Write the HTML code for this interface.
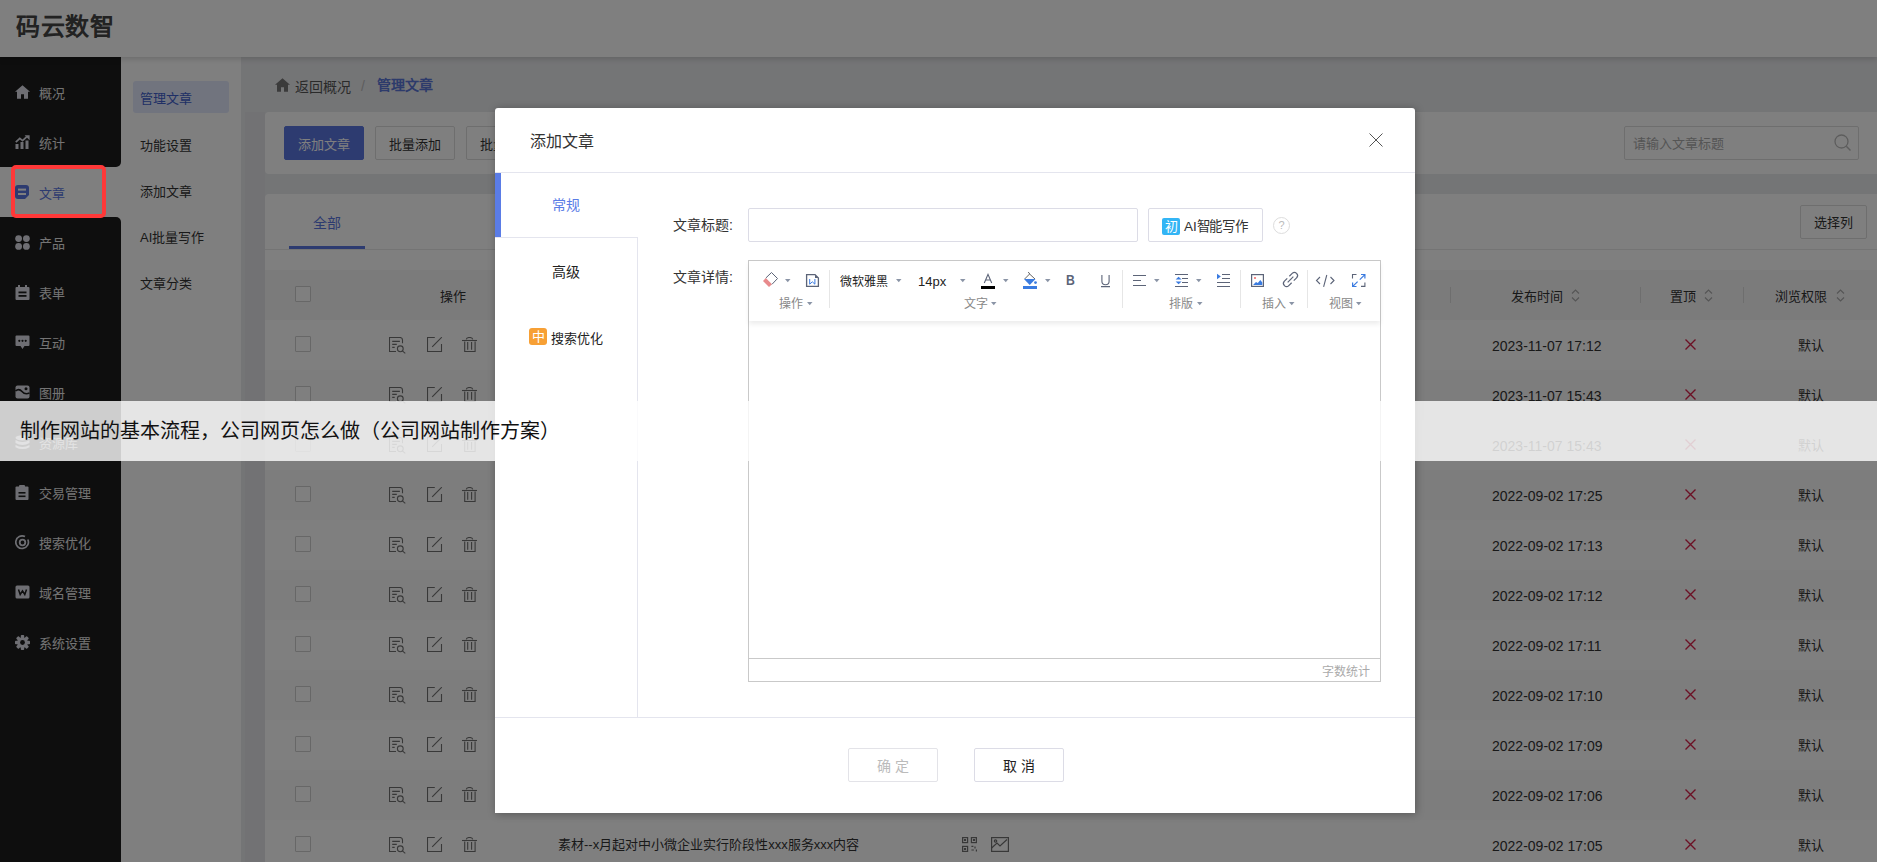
<!DOCTYPE html>
<html lang="zh-CN"><head><meta charset="utf-8"><style>
*{box-sizing:border-box;margin:0;padding:0}
html,body{width:1877px;height:862px;overflow:hidden;font-family:"Liberation Sans",sans-serif;background:#f0f1f5;color:#333}
.a{position:absolute}
.t{position:absolute;white-space:nowrap;line-height:20px}
.btn{position:absolute;height:34px;border:1px solid #dcdcdc;border-radius:2px;font-size:13px;line-height:35px;text-align:center;color:#333;background:#fff;white-space:nowrap}
.si{position:absolute;left:0;width:121px;height:50px}
.si span{position:absolute;left:39px;top:17px;line-height:20px;font-size:13px;color:#e8e8e8;white-space:nowrap}
.si svg{position:absolute;left:15px;top:18px}
</style></head><body>
<div class="a" style="left:241px;top:57px;width:1636px;height:805px;background:#e9eaed"></div>
<div class="a" style="left:245px;top:112px;width:20px;height:750px;background:#e4e5e8"></div>
<div class="a" style="left:121px;top:57px;width:120px;height:805px;background:#fff"></div>
<div class="a" style="left:133px;top:81px;width:96px;height:32px;background:#e2e8fd;border-radius:3px"></div>
<div class="t" style="left:140px;top:89px;font-size:13px;color:#3f5fcc">管理文章</div>
<div class="t" style="left:140px;top:136px;font-size:13px;color:#333">功能设置</div>
<div class="t" style="left:140px;top:182px;font-size:13px;color:#333">添加文章</div>
<div class="t" style="left:140px;top:228px;font-size:13px;color:#333">AI批量写作</div>
<div class="t" style="left:140px;top:274px;font-size:13px;color:#333">文章分类</div>
<div class="a" style="left:0;top:57px;width:121px;height:805px;background:#fff"></div>
<div class="a" style="left:0;top:57px;width:121px;height:110px;background:#1c1c1c;border-bottom-right-radius:5px"></div>
<div class="a" style="left:0;top:217px;width:121px;height:645px;background:#1c1c1c;border-top-right-radius:5px"></div>
<div class="si" style="top:67px"><svg width="15" height="14" viewBox="0 0 15 14"><path d="M7.5 0.3 L0 6.8 H2 V13.7 H6 V9.3 H9 V13.7 H13 V6.8 H15 Z" fill="#dcdde6"/></svg><span style="color:#e8e8e8">概况</span></div>
<div class="si" style="top:117px"><svg width="15" height="14" viewBox="0 0 15 14" fill="#dcdde6"><rect x="0.5" y="9" width="3" height="5"/><rect x="5.5" y="7" width="3" height="7"/><rect x="10.5" y="5.5" width="3" height="8.5"/><path d="M0.8 7.2 L4.8 3.4 L7.6 5.6 L11.6 1.8" stroke="#dcdde6" stroke-width="1.8" fill="none"/><path d="M9.6 0.2 H14.6 V5.2 z"/></svg><span style="color:#e8e8e8">统计</span></div>
<div class="si" style="top:167px"><svg width="14" height="14" viewBox="0 0 14 14"><path d="M3 0 H11 Q14 0 14 3 V10 L10 14 H3 Q0 14 0 11 V3 Q0 0 3 0Z" fill="#5a76e0"/><rect x="3" y="3.6" width="8" height="2" fill="#fff"/><rect x="3" y="8" width="8" height="2" fill="#fff"/></svg><span style="color:#5a76e0">文章</span></div>
<div class="si" style="top:217px"><svg width="15" height="15" viewBox="0 0 15 15" fill="#dcdde6"><circle cx="3.6" cy="3.6" r="3.4"/><circle cx="11.4" cy="3.6" r="3.4"/><circle cx="3.6" cy="11.4" r="3.4"/><circle cx="11.4" cy="11.4" r="3.4"/></svg><span style="color:#e8e8e8">产品</span></div>
<div class="si" style="top:267px"><svg width="15" height="15" viewBox="0 0 15 15"><path d="M1.5 2 H13.5 Q14.5 2 14.5 3 V14 Q14.5 15 13.5 15 H1.5 Q0.5 15 0.5 14 V3 Q0.5 2 1.5 2Z" fill="#dcdde6"/><rect x="3" y="0" width="2" height="4" fill="#dcdde6"/><rect x="10" y="0" width="2" height="4" fill="#dcdde6"/><rect x="3.5" y="6.5" width="8" height="1.8" fill="#1c1c1c"/><rect x="3.5" y="10" width="8" height="1.8" fill="#1c1c1c"/></svg><span style="color:#e8e8e8">表单</span></div>
<div class="si" style="top:317px"><svg width="15" height="15" viewBox="0 0 15 15"><path d="M1.5 0.5 H13.5 Q14.5 0.5 14.5 1.5 V10 Q14.5 11 13.5 11 H9.5 L7.5 14 L5.5 11 H1.5 Q0.5 11 0.5 10 V1.5 Q0.5 0.5 1.5 0.5Z" fill="#dcdde6"/><circle cx="4.3" cy="5.8" r="1.1" fill="#1c1c1c"/><circle cx="7.5" cy="5.8" r="1.1" fill="#1c1c1c"/><circle cx="10.7" cy="5.8" r="1.1" fill="#1c1c1c"/></svg><span style="color:#e8e8e8">互动</span></div>
<div class="si" style="top:367px"><svg width="15" height="14" viewBox="0 0 15 14"><rect x="0.5" y="0.5" width="14" height="13" rx="2" fill="#dcdde6"/><path d="M0.5 6 Q4 3 7 6.5 Q10 10 14.5 8" stroke="#1c1c1c" stroke-width="1.6" fill="none"/><circle cx="11" cy="3.8" r="1.5" fill="#1c1c1c"/></svg><span style="color:#e8e8e8">图册</span></div>
<div class="si" style="top:417px"><svg width="15" height="15" viewBox="0 0 15 15" fill="#dcdde6"><ellipse cx="7.5" cy="2.8" rx="7" ry="2.6"/><path d="M0.5 5 Q7.5 9 14.5 5 V8 Q7.5 12 0.5 8z"/><path d="M0.5 10 Q7.5 14 14.5 10 V12.2 Q7.5 16 0.5 12.2z"/></svg><span style="color:#e8e8e8">资源库</span></div>
<div class="si" style="top:467px"><svg width="14" height="15" viewBox="0 0 14 15"><path d="M1.5 1.5 H12.5 Q13.5 1.5 13.5 2.5 V14 Q13.5 15 12.5 15 H1.5 Q0.5 15 0.5 14 V2.5 Q0.5 1.5 1.5 1.5Z" fill="#dcdde6"/><rect x="4" y="0" width="6" height="3" rx="1" fill="#dcdde6"/><rect x="3.5" y="7" width="7" height="1.6" fill="#1c1c1c"/><rect x="3.5" y="10.5" width="7" height="1.6" fill="#1c1c1c"/></svg><span style="color:#e8e8e8">交易管理</span></div>
<div class="si" style="top:517px"><svg width="15" height="15" viewBox="0 0 15 15" fill="none" stroke="#dcdde6"><path d="M12.8 4.5 A6.3 6.3 0 1 1 10 1.6" stroke-width="1.7"/><circle cx="7.5" cy="7.5" r="2.8" stroke-width="1.8"/></svg><span style="color:#e8e8e8">搜索优化</span></div>
<div class="si" style="top:567px"><svg width="15" height="14" viewBox="0 0 15 14"><rect x="0.5" y="0.5" width="14" height="13" rx="1.5" fill="#dcdde6"/><path d="M3.5 4.5 L5.2 9.5 L7.5 5.8 L9.8 9.5 L11.5 4.5" stroke="#1c1c1c" stroke-width="1.5" fill="none"/></svg><span style="color:#e8e8e8">域名管理</span></div>
<div class="si" style="top:617px"><svg width="15" height="15" viewBox="0 0 15 15"><g fill="#dcdde6"><circle cx="7.5" cy="7.5" r="5.3"/><rect x="5.8" y="0" width="3.4" height="15" rx="0.8"/><rect x="0" y="5.8" width="15" height="3.4" rx="0.8"/><rect x="5.8" y="0" width="3.4" height="15" rx="0.8" transform="rotate(45 7.5 7.5)"/><rect x="5.8" y="0" width="3.4" height="15" rx="0.8" transform="rotate(-45 7.5 7.5)"/></g><circle cx="7.5" cy="7.5" r="2.4" fill="#1c1c1c"/></svg><span style="color:#e8e8e8">系统设置</span></div>
<div class="a" style="left:0;top:0;width:1877px;height:57px;background:#fff;box-shadow:0 2px 6px rgba(0,0,0,.16)"></div>
<div class="t" style="left:16px;top:12px;font-size:24px;line-height:30px;font-weight:bold;color:#444;letter-spacing:0.5px">码云数智</div>
<svg class="a" style="left:275px;top:78px" width="15" height="14" viewBox="0 0 15 14"><path d="M7.5 0.3 L0 6.8 H2 V13.7 H6 V9.3 H9 V13.7 H13 V6.8 H15 Z" fill="#777"/></svg>
<div class="t" style="left:295px;top:77px;font-size:14px;color:#555">返回概况</div>
<div class="t" style="left:361px;top:76px;font-size:14px;color:#bbb">/</div>
<div class="t" style="left:377px;top:75px;font-size:14px;color:#5a76d6;font-weight:bold">管理文章</div>
<div class="a" style="left:265px;top:112px;width:1630px;height:62px;background:#fff;border-radius:4px"></div>
<div class="btn" style="left:284px;top:126px;width:80px;background:#5a76e0;border-color:#5a76e0;color:#fff">添加文章</div>
<div class="btn" style="left:375px;top:126px;width:80px">批量添加</div>
<div class="btn" style="left:466px;top:126px;width:80px">批量删除</div>
<div class="a" style="left:1624px;top:126px;width:235px;height:34px;border:1px solid #dcdcdc;border-radius:2px;background:#fff"></div>
<div class="t" style="left:1633px;top:134px;font-size:13px;color:#aaa">请输入文章标题</div>
<svg class="a" style="left:1834px;top:134px" width="18" height="18" viewBox="0 0 18 18"><circle cx="7.5" cy="7.5" r="6.5" fill="none" stroke="#bbb" stroke-width="1.3"/><path d="M12.3 12.3 L16.5 16.5" stroke="#bbb" stroke-width="1.5"/></svg>
<div class="a" style="left:265px;top:194px;width:1630px;height:700px;background:#fff;border-radius:4px"></div>
<div class="t" style="left:313px;top:213px;font-size:14px;color:#5a76e0">全部</div>
<div class="a" style="left:289px;top:246px;width:76px;height:3px;background:#5a76e0"></div>
<div class="a" style="left:265px;top:249px;width:1612px;height:1px;background:#e8e8e8"></div>
<div class="btn" style="left:1800px;top:205px;width:67px;height:34px;line-height:33px">选择列</div>
<div class="a" style="left:265px;top:270px;width:1612px;height:50px;background:#f6f6f7"></div>
<div class="a" style="left:295px;top:286px;width:16px;height:16px;border:1px solid #cfcfcf;background:#fff;border-radius:1px"></div>
<div class="t" style="left:440px;top:287px;font-size:13px;color:#333">操作</div>
<div class="a" style="left:1450px;top:287px;width:1px;height:16px;background:#ddd"></div>
<div class="a" style="left:1640px;top:287px;width:1px;height:16px;background:#ddd"></div>
<div class="a" style="left:1743px;top:287px;width:1px;height:16px;background:#ddd"></div>
<div class="t" style="left:1511px;top:287px;font-size:13px;color:#333">发布时间</div>
<div class="a" style="left:1571px;top:288px"><svg width="9" height="15" viewBox="0 0 9 15" fill="none" stroke="#aaa" stroke-width="1.1"><path d="M1 5.5 L4.5 2 L8 5.5M1 9.5 L4.5 13 L8 9.5"/></svg></div>
<div class="t" style="left:1670px;top:287px;font-size:13px;color:#333">置顶</div>
<div class="a" style="left:1704px;top:288px"><svg width="9" height="15" viewBox="0 0 9 15" fill="none" stroke="#aaa" stroke-width="1.1"><path d="M1 5.5 L4.5 2 L8 5.5M1 9.5 L4.5 13 L8 9.5"/></svg></div>
<div class="t" style="left:1775px;top:287px;font-size:13px;color:#333">浏览权限</div>
<div class="a" style="left:1836px;top:288px"><svg width="9" height="15" viewBox="0 0 9 15" fill="none" stroke="#aaa" stroke-width="1.1"><path d="M1 5.5 L4.5 2 L8 5.5M1 9.5 L4.5 13 L8 9.5"/></svg></div>
<div class="a" style="left:265px;top:320px;width:1612px;height:50px;background:#fff"></div>
<div class="a" style="left:295px;top:336px;width:16px;height:16px;border:1px solid #cfcfcf;background:#fff;border-radius:1px"></div>
<div class="a" style="left:389px;top:337px"><svg width="18" height="17" viewBox="0 0 18 17" fill="none" stroke="#707070" stroke-width="1.1"><path d="M7 14.5 H0.5 V0.5 H11 Q13.5 0.5 13.5 3 V6.3"/><path d="M3.2 4.4 H10.9 M3.2 7.4 H7.8 M3.2 10.4 H5.7"/><circle cx="11.3" cy="11.8" r="2.9"/><path d="M13.35 13.85 L16.3 16.3"/></svg></div>
<div class="a" style="left:427px;top:337px"><svg width="16" height="16" viewBox="0 0 16 16" fill="none" stroke="#707070" stroke-width="1.1"><path d="M7.8 0.5 H0.5 V14.5 H14.5 V7"/><path d="M5.2 9.8 L14.8 0.2"/></svg></div>
<div class="a" style="left:462px;top:337px"><svg width="16" height="16" viewBox="0 0 16 16" fill="none" stroke="#707070" stroke-width="1.1"><path d="M0 3.5 H15"/><path d="M4.3 2.3 Q4.6 0.5 7.5 0.5 Q10.4 0.5 10.7 2.3"/><path d="M2.7 4.6 V14.5 H13.1 V4.6"/><path d="M5.7 5 V12.7 M9.6 5 V12.7"/></svg></div>
<div class="t" style="left:1492px;top:336px;font-size:14px;color:#333">2023-11-07 17:12</div>
<svg class="a" style="left:1685px;top:339px" width="11" height="11" viewBox="0 0 11 11" stroke="#d9224a" stroke-width="1.4"><path d="M0.5 0.5 L10.5 10.5M10.5 0.5 L0.5 10.5"/></svg>
<div class="t" style="left:1798px;top:336px;font-size:13px;color:#333">默认</div>
<div class="a" style="left:265px;top:370px;width:1612px;height:50px;background:#fafafa"></div>
<div class="a" style="left:295px;top:386px;width:16px;height:16px;border:1px solid #cfcfcf;background:#fff;border-radius:1px"></div>
<div class="a" style="left:389px;top:387px"><svg width="18" height="17" viewBox="0 0 18 17" fill="none" stroke="#707070" stroke-width="1.1"><path d="M7 14.5 H0.5 V0.5 H11 Q13.5 0.5 13.5 3 V6.3"/><path d="M3.2 4.4 H10.9 M3.2 7.4 H7.8 M3.2 10.4 H5.7"/><circle cx="11.3" cy="11.8" r="2.9"/><path d="M13.35 13.85 L16.3 16.3"/></svg></div>
<div class="a" style="left:427px;top:387px"><svg width="16" height="16" viewBox="0 0 16 16" fill="none" stroke="#707070" stroke-width="1.1"><path d="M7.8 0.5 H0.5 V14.5 H14.5 V7"/><path d="M5.2 9.8 L14.8 0.2"/></svg></div>
<div class="a" style="left:462px;top:387px"><svg width="16" height="16" viewBox="0 0 16 16" fill="none" stroke="#707070" stroke-width="1.1"><path d="M0 3.5 H15"/><path d="M4.3 2.3 Q4.6 0.5 7.5 0.5 Q10.4 0.5 10.7 2.3"/><path d="M2.7 4.6 V14.5 H13.1 V4.6"/><path d="M5.7 5 V12.7 M9.6 5 V12.7"/></svg></div>
<div class="t" style="left:1492px;top:386px;font-size:14px;color:#333">2023-11-07 15:43</div>
<svg class="a" style="left:1685px;top:389px" width="11" height="11" viewBox="0 0 11 11" stroke="#d9224a" stroke-width="1.4"><path d="M0.5 0.5 L10.5 10.5M10.5 0.5 L0.5 10.5"/></svg>
<div class="t" style="left:1798px;top:386px;font-size:13px;color:#333">默认</div>
<div class="a" style="left:265px;top:420px;width:1612px;height:50px;background:#fff"></div>
<div class="a" style="left:295px;top:436px;width:16px;height:16px;border:1px solid #cfcfcf;background:#fff;border-radius:1px"></div>
<div class="a" style="left:389px;top:437px"><svg width="18" height="17" viewBox="0 0 18 17" fill="none" stroke="#707070" stroke-width="1.1"><path d="M7 14.5 H0.5 V0.5 H11 Q13.5 0.5 13.5 3 V6.3"/><path d="M3.2 4.4 H10.9 M3.2 7.4 H7.8 M3.2 10.4 H5.7"/><circle cx="11.3" cy="11.8" r="2.9"/><path d="M13.35 13.85 L16.3 16.3"/></svg></div>
<div class="a" style="left:427px;top:437px"><svg width="16" height="16" viewBox="0 0 16 16" fill="none" stroke="#707070" stroke-width="1.1"><path d="M7.8 0.5 H0.5 V14.5 H14.5 V7"/><path d="M5.2 9.8 L14.8 0.2"/></svg></div>
<div class="a" style="left:462px;top:437px"><svg width="16" height="16" viewBox="0 0 16 16" fill="none" stroke="#707070" stroke-width="1.1"><path d="M0 3.5 H15"/><path d="M4.3 2.3 Q4.6 0.5 7.5 0.5 Q10.4 0.5 10.7 2.3"/><path d="M2.7 4.6 V14.5 H13.1 V4.6"/><path d="M5.7 5 V12.7 M9.6 5 V12.7"/></svg></div>
<div class="t" style="left:1492px;top:436px;font-size:14px;color:#333">2023-11-07 15:43</div>
<svg class="a" style="left:1685px;top:439px" width="11" height="11" viewBox="0 0 11 11" stroke="#d9224a" stroke-width="1.4"><path d="M0.5 0.5 L10.5 10.5M10.5 0.5 L0.5 10.5"/></svg>
<div class="t" style="left:1798px;top:436px;font-size:13px;color:#333">默认</div>
<div class="a" style="left:265px;top:470px;width:1612px;height:50px;background:#fafafa"></div>
<div class="a" style="left:295px;top:486px;width:16px;height:16px;border:1px solid #cfcfcf;background:#fff;border-radius:1px"></div>
<div class="a" style="left:389px;top:487px"><svg width="18" height="17" viewBox="0 0 18 17" fill="none" stroke="#707070" stroke-width="1.1"><path d="M7 14.5 H0.5 V0.5 H11 Q13.5 0.5 13.5 3 V6.3"/><path d="M3.2 4.4 H10.9 M3.2 7.4 H7.8 M3.2 10.4 H5.7"/><circle cx="11.3" cy="11.8" r="2.9"/><path d="M13.35 13.85 L16.3 16.3"/></svg></div>
<div class="a" style="left:427px;top:487px"><svg width="16" height="16" viewBox="0 0 16 16" fill="none" stroke="#707070" stroke-width="1.1"><path d="M7.8 0.5 H0.5 V14.5 H14.5 V7"/><path d="M5.2 9.8 L14.8 0.2"/></svg></div>
<div class="a" style="left:462px;top:487px"><svg width="16" height="16" viewBox="0 0 16 16" fill="none" stroke="#707070" stroke-width="1.1"><path d="M0 3.5 H15"/><path d="M4.3 2.3 Q4.6 0.5 7.5 0.5 Q10.4 0.5 10.7 2.3"/><path d="M2.7 4.6 V14.5 H13.1 V4.6"/><path d="M5.7 5 V12.7 M9.6 5 V12.7"/></svg></div>
<div class="t" style="left:1492px;top:486px;font-size:14px;color:#333">2022-09-02 17:25</div>
<svg class="a" style="left:1685px;top:489px" width="11" height="11" viewBox="0 0 11 11" stroke="#d9224a" stroke-width="1.4"><path d="M0.5 0.5 L10.5 10.5M10.5 0.5 L0.5 10.5"/></svg>
<div class="t" style="left:1798px;top:486px;font-size:13px;color:#333">默认</div>
<div class="a" style="left:265px;top:520px;width:1612px;height:50px;background:#fff"></div>
<div class="a" style="left:295px;top:536px;width:16px;height:16px;border:1px solid #cfcfcf;background:#fff;border-radius:1px"></div>
<div class="a" style="left:389px;top:537px"><svg width="18" height="17" viewBox="0 0 18 17" fill="none" stroke="#707070" stroke-width="1.1"><path d="M7 14.5 H0.5 V0.5 H11 Q13.5 0.5 13.5 3 V6.3"/><path d="M3.2 4.4 H10.9 M3.2 7.4 H7.8 M3.2 10.4 H5.7"/><circle cx="11.3" cy="11.8" r="2.9"/><path d="M13.35 13.85 L16.3 16.3"/></svg></div>
<div class="a" style="left:427px;top:537px"><svg width="16" height="16" viewBox="0 0 16 16" fill="none" stroke="#707070" stroke-width="1.1"><path d="M7.8 0.5 H0.5 V14.5 H14.5 V7"/><path d="M5.2 9.8 L14.8 0.2"/></svg></div>
<div class="a" style="left:462px;top:537px"><svg width="16" height="16" viewBox="0 0 16 16" fill="none" stroke="#707070" stroke-width="1.1"><path d="M0 3.5 H15"/><path d="M4.3 2.3 Q4.6 0.5 7.5 0.5 Q10.4 0.5 10.7 2.3"/><path d="M2.7 4.6 V14.5 H13.1 V4.6"/><path d="M5.7 5 V12.7 M9.6 5 V12.7"/></svg></div>
<div class="t" style="left:1492px;top:536px;font-size:14px;color:#333">2022-09-02 17:13</div>
<svg class="a" style="left:1685px;top:539px" width="11" height="11" viewBox="0 0 11 11" stroke="#d9224a" stroke-width="1.4"><path d="M0.5 0.5 L10.5 10.5M10.5 0.5 L0.5 10.5"/></svg>
<div class="t" style="left:1798px;top:536px;font-size:13px;color:#333">默认</div>
<div class="a" style="left:265px;top:570px;width:1612px;height:50px;background:#fafafa"></div>
<div class="a" style="left:295px;top:586px;width:16px;height:16px;border:1px solid #cfcfcf;background:#fff;border-radius:1px"></div>
<div class="a" style="left:389px;top:587px"><svg width="18" height="17" viewBox="0 0 18 17" fill="none" stroke="#707070" stroke-width="1.1"><path d="M7 14.5 H0.5 V0.5 H11 Q13.5 0.5 13.5 3 V6.3"/><path d="M3.2 4.4 H10.9 M3.2 7.4 H7.8 M3.2 10.4 H5.7"/><circle cx="11.3" cy="11.8" r="2.9"/><path d="M13.35 13.85 L16.3 16.3"/></svg></div>
<div class="a" style="left:427px;top:587px"><svg width="16" height="16" viewBox="0 0 16 16" fill="none" stroke="#707070" stroke-width="1.1"><path d="M7.8 0.5 H0.5 V14.5 H14.5 V7"/><path d="M5.2 9.8 L14.8 0.2"/></svg></div>
<div class="a" style="left:462px;top:587px"><svg width="16" height="16" viewBox="0 0 16 16" fill="none" stroke="#707070" stroke-width="1.1"><path d="M0 3.5 H15"/><path d="M4.3 2.3 Q4.6 0.5 7.5 0.5 Q10.4 0.5 10.7 2.3"/><path d="M2.7 4.6 V14.5 H13.1 V4.6"/><path d="M5.7 5 V12.7 M9.6 5 V12.7"/></svg></div>
<div class="t" style="left:1492px;top:586px;font-size:14px;color:#333">2022-09-02 17:12</div>
<svg class="a" style="left:1685px;top:589px" width="11" height="11" viewBox="0 0 11 11" stroke="#d9224a" stroke-width="1.4"><path d="M0.5 0.5 L10.5 10.5M10.5 0.5 L0.5 10.5"/></svg>
<div class="t" style="left:1798px;top:586px;font-size:13px;color:#333">默认</div>
<div class="a" style="left:265px;top:620px;width:1612px;height:50px;background:#fff"></div>
<div class="a" style="left:295px;top:636px;width:16px;height:16px;border:1px solid #cfcfcf;background:#fff;border-radius:1px"></div>
<div class="a" style="left:389px;top:637px"><svg width="18" height="17" viewBox="0 0 18 17" fill="none" stroke="#707070" stroke-width="1.1"><path d="M7 14.5 H0.5 V0.5 H11 Q13.5 0.5 13.5 3 V6.3"/><path d="M3.2 4.4 H10.9 M3.2 7.4 H7.8 M3.2 10.4 H5.7"/><circle cx="11.3" cy="11.8" r="2.9"/><path d="M13.35 13.85 L16.3 16.3"/></svg></div>
<div class="a" style="left:427px;top:637px"><svg width="16" height="16" viewBox="0 0 16 16" fill="none" stroke="#707070" stroke-width="1.1"><path d="M7.8 0.5 H0.5 V14.5 H14.5 V7"/><path d="M5.2 9.8 L14.8 0.2"/></svg></div>
<div class="a" style="left:462px;top:637px"><svg width="16" height="16" viewBox="0 0 16 16" fill="none" stroke="#707070" stroke-width="1.1"><path d="M0 3.5 H15"/><path d="M4.3 2.3 Q4.6 0.5 7.5 0.5 Q10.4 0.5 10.7 2.3"/><path d="M2.7 4.6 V14.5 H13.1 V4.6"/><path d="M5.7 5 V12.7 M9.6 5 V12.7"/></svg></div>
<div class="t" style="left:1492px;top:636px;font-size:14px;color:#333">2022-09-02 17:11</div>
<svg class="a" style="left:1685px;top:639px" width="11" height="11" viewBox="0 0 11 11" stroke="#d9224a" stroke-width="1.4"><path d="M0.5 0.5 L10.5 10.5M10.5 0.5 L0.5 10.5"/></svg>
<div class="t" style="left:1798px;top:636px;font-size:13px;color:#333">默认</div>
<div class="a" style="left:265px;top:670px;width:1612px;height:50px;background:#fafafa"></div>
<div class="a" style="left:295px;top:686px;width:16px;height:16px;border:1px solid #cfcfcf;background:#fff;border-radius:1px"></div>
<div class="a" style="left:389px;top:687px"><svg width="18" height="17" viewBox="0 0 18 17" fill="none" stroke="#707070" stroke-width="1.1"><path d="M7 14.5 H0.5 V0.5 H11 Q13.5 0.5 13.5 3 V6.3"/><path d="M3.2 4.4 H10.9 M3.2 7.4 H7.8 M3.2 10.4 H5.7"/><circle cx="11.3" cy="11.8" r="2.9"/><path d="M13.35 13.85 L16.3 16.3"/></svg></div>
<div class="a" style="left:427px;top:687px"><svg width="16" height="16" viewBox="0 0 16 16" fill="none" stroke="#707070" stroke-width="1.1"><path d="M7.8 0.5 H0.5 V14.5 H14.5 V7"/><path d="M5.2 9.8 L14.8 0.2"/></svg></div>
<div class="a" style="left:462px;top:687px"><svg width="16" height="16" viewBox="0 0 16 16" fill="none" stroke="#707070" stroke-width="1.1"><path d="M0 3.5 H15"/><path d="M4.3 2.3 Q4.6 0.5 7.5 0.5 Q10.4 0.5 10.7 2.3"/><path d="M2.7 4.6 V14.5 H13.1 V4.6"/><path d="M5.7 5 V12.7 M9.6 5 V12.7"/></svg></div>
<div class="t" style="left:1492px;top:686px;font-size:14px;color:#333">2022-09-02 17:10</div>
<svg class="a" style="left:1685px;top:689px" width="11" height="11" viewBox="0 0 11 11" stroke="#d9224a" stroke-width="1.4"><path d="M0.5 0.5 L10.5 10.5M10.5 0.5 L0.5 10.5"/></svg>
<div class="t" style="left:1798px;top:686px;font-size:13px;color:#333">默认</div>
<div class="a" style="left:265px;top:720px;width:1612px;height:50px;background:#fff"></div>
<div class="a" style="left:295px;top:736px;width:16px;height:16px;border:1px solid #cfcfcf;background:#fff;border-radius:1px"></div>
<div class="a" style="left:389px;top:737px"><svg width="18" height="17" viewBox="0 0 18 17" fill="none" stroke="#707070" stroke-width="1.1"><path d="M7 14.5 H0.5 V0.5 H11 Q13.5 0.5 13.5 3 V6.3"/><path d="M3.2 4.4 H10.9 M3.2 7.4 H7.8 M3.2 10.4 H5.7"/><circle cx="11.3" cy="11.8" r="2.9"/><path d="M13.35 13.85 L16.3 16.3"/></svg></div>
<div class="a" style="left:427px;top:737px"><svg width="16" height="16" viewBox="0 0 16 16" fill="none" stroke="#707070" stroke-width="1.1"><path d="M7.8 0.5 H0.5 V14.5 H14.5 V7"/><path d="M5.2 9.8 L14.8 0.2"/></svg></div>
<div class="a" style="left:462px;top:737px"><svg width="16" height="16" viewBox="0 0 16 16" fill="none" stroke="#707070" stroke-width="1.1"><path d="M0 3.5 H15"/><path d="M4.3 2.3 Q4.6 0.5 7.5 0.5 Q10.4 0.5 10.7 2.3"/><path d="M2.7 4.6 V14.5 H13.1 V4.6"/><path d="M5.7 5 V12.7 M9.6 5 V12.7"/></svg></div>
<div class="t" style="left:1492px;top:736px;font-size:14px;color:#333">2022-09-02 17:09</div>
<svg class="a" style="left:1685px;top:739px" width="11" height="11" viewBox="0 0 11 11" stroke="#d9224a" stroke-width="1.4"><path d="M0.5 0.5 L10.5 10.5M10.5 0.5 L0.5 10.5"/></svg>
<div class="t" style="left:1798px;top:736px;font-size:13px;color:#333">默认</div>
<div class="a" style="left:265px;top:770px;width:1612px;height:50px;background:#fafafa"></div>
<div class="a" style="left:295px;top:786px;width:16px;height:16px;border:1px solid #cfcfcf;background:#fff;border-radius:1px"></div>
<div class="a" style="left:389px;top:787px"><svg width="18" height="17" viewBox="0 0 18 17" fill="none" stroke="#707070" stroke-width="1.1"><path d="M7 14.5 H0.5 V0.5 H11 Q13.5 0.5 13.5 3 V6.3"/><path d="M3.2 4.4 H10.9 M3.2 7.4 H7.8 M3.2 10.4 H5.7"/><circle cx="11.3" cy="11.8" r="2.9"/><path d="M13.35 13.85 L16.3 16.3"/></svg></div>
<div class="a" style="left:427px;top:787px"><svg width="16" height="16" viewBox="0 0 16 16" fill="none" stroke="#707070" stroke-width="1.1"><path d="M7.8 0.5 H0.5 V14.5 H14.5 V7"/><path d="M5.2 9.8 L14.8 0.2"/></svg></div>
<div class="a" style="left:462px;top:787px"><svg width="16" height="16" viewBox="0 0 16 16" fill="none" stroke="#707070" stroke-width="1.1"><path d="M0 3.5 H15"/><path d="M4.3 2.3 Q4.6 0.5 7.5 0.5 Q10.4 0.5 10.7 2.3"/><path d="M2.7 4.6 V14.5 H13.1 V4.6"/><path d="M5.7 5 V12.7 M9.6 5 V12.7"/></svg></div>
<div class="t" style="left:1492px;top:786px;font-size:14px;color:#333">2022-09-02 17:06</div>
<svg class="a" style="left:1685px;top:789px" width="11" height="11" viewBox="0 0 11 11" stroke="#d9224a" stroke-width="1.4"><path d="M0.5 0.5 L10.5 10.5M10.5 0.5 L0.5 10.5"/></svg>
<div class="t" style="left:1798px;top:786px;font-size:13px;color:#333">默认</div>
<div class="a" style="left:265px;top:820px;width:1612px;height:50px;background:#fff"></div>
<div class="a" style="left:295px;top:836px;width:16px;height:16px;border:1px solid #cfcfcf;background:#fff;border-radius:1px"></div>
<div class="a" style="left:389px;top:837px"><svg width="18" height="17" viewBox="0 0 18 17" fill="none" stroke="#707070" stroke-width="1.1"><path d="M7 14.5 H0.5 V0.5 H11 Q13.5 0.5 13.5 3 V6.3"/><path d="M3.2 4.4 H10.9 M3.2 7.4 H7.8 M3.2 10.4 H5.7"/><circle cx="11.3" cy="11.8" r="2.9"/><path d="M13.35 13.85 L16.3 16.3"/></svg></div>
<div class="a" style="left:427px;top:837px"><svg width="16" height="16" viewBox="0 0 16 16" fill="none" stroke="#707070" stroke-width="1.1"><path d="M7.8 0.5 H0.5 V14.5 H14.5 V7"/><path d="M5.2 9.8 L14.8 0.2"/></svg></div>
<div class="a" style="left:462px;top:837px"><svg width="16" height="16" viewBox="0 0 16 16" fill="none" stroke="#707070" stroke-width="1.1"><path d="M0 3.5 H15"/><path d="M4.3 2.3 Q4.6 0.5 7.5 0.5 Q10.4 0.5 10.7 2.3"/><path d="M2.7 4.6 V14.5 H13.1 V4.6"/><path d="M5.7 5 V12.7 M9.6 5 V12.7"/></svg></div>
<div class="t" style="left:1492px;top:836px;font-size:14px;color:#333">2022-09-02 17:05</div>
<svg class="a" style="left:1685px;top:839px" width="11" height="11" viewBox="0 0 11 11" stroke="#d9224a" stroke-width="1.4"><path d="M0.5 0.5 L10.5 10.5M10.5 0.5 L0.5 10.5"/></svg>
<div class="t" style="left:1798px;top:836px;font-size:13px;color:#333">默认</div>
<div class="t" style="left:558px;top:835px;font-size:13px;color:#333">素材--x月起对中小微企业实行阶段性xxx服务xxx内容</div>
<svg class="a" style="left:962px;top:837px" width="15" height="15" viewBox="0 0 15 15" fill="none" stroke="#707070" stroke-width="1.2"><rect x="0.6" y="0.6" width="5" height="5"/><rect x="9.4" y="0.6" width="5" height="5"/><rect x="0.6" y="9.4" width="5" height="5"/><path d="M2.5 2.5h1v1h-1zM11.5 2.5h1v1h-1zM2.5 11.5h1v1h-1z"/><path d="M9.4 9.4h2M13 9.4v2M9.4 13h2.5M14.4 12.5v2"/></svg>
<svg class="a" style="left:991px;top:837px" width="18" height="15" viewBox="0 0 18 15" fill="none" stroke="#707070" stroke-width="1.2"><rect x="0.6" y="0.6" width="16.8" height="13.8"/><path d="M0.6 11 L6 6 L9 9 L16 2.5"/><circle cx="4.5" cy="4" r="1.2"/></svg>
<div class="a" style="left:0;top:0;width:1877px;height:862px;background:rgba(0,0,0,.5)"></div>
<div class="a" style="left:495px;top:108px;width:920px;height:705px;background:#fff;border-radius:3px 3px 0 0;box-shadow:1px 1px 8px rgba(0,0,0,.3)"></div>
<div class="t" style="left:530px;top:131px;font-size:16px;line-height:22px;color:#333">添加文章</div>
<svg class="a" style="left:1369px;top:133px" width="14" height="14" viewBox="0 0 14 14" stroke="#555" stroke-width="1"><path d="M0.5 0.5L13.5 13.5M13.5 0.5L0.5 13.5"/></svg>
<div class="a" style="left:495px;top:172px;width:920px;height:1px;background:#e4e5ee"></div>
<div class="a" style="left:495px;top:173px;width:6px;height:64px;background:#5a7ce6"></div>
<div class="a" style="left:495px;top:237px;width:142px;height:1px;background:#e4e5ee"></div>
<div class="a" style="left:637px;top:237px;width:1px;height:480px;background:#e4e5ee"></div>
<div class="a" style="left:495px;top:717px;width:920px;height:1px;background:#e4e5ee"></div>
<div class="t" style="left:552px;top:195px;font-size:14px;color:#5a7ce6">常规</div>
<div class="t" style="left:552px;top:262px;font-size:14px;color:#222">高级</div>
<div class="a" style="left:529px;top:328px;width:18px;height:17px;background:#f7a035;border-radius:3px;color:#fff;font-size:13px;line-height:17px;text-align:center">中</div>
<div class="t" style="left:551px;top:329px;font-size:13px;color:#222">搜索优化</div>
<div class="t" style="left:673px;top:215px;font-size:14px;color:#333">文章标题:</div>
<div class="t" style="left:673px;top:267px;font-size:14px;color:#333">文章详情:</div>
<div class="a" style="left:748px;top:208px;width:390px;height:34px;border:1px solid #dcdce6;border-radius:2px"></div>
<div class="a" style="left:1148px;top:208px;width:115px;height:34px;border:1px solid #dcdce6;border-radius:2px"></div>
<div class="a" style="left:1162px;top:218px;width:18px;height:17px;background:#33b5f5;border-radius:2px;color:#fff;font-size:13px;line-height:17px;text-align:center">初</div>
<div class="t" style="left:1184px;top:217px;font-size:13.5px;color:#333;letter-spacing:-0.1px">AI智能写作</div>
<div class="a" style="left:1273px;top:217px;width:17px;height:17px;border:1px solid #ddd;border-radius:50%;color:#bbb;font-size:11px;line-height:15px;text-align:center">?</div>
<div class="a" style="left:748px;top:260px;width:633px;height:422px;border:1px solid #c9c9c9"></div>
<div class="a" style="left:749px;top:261px;width:631px;height:60px;background:#fff;box-shadow:0 3px 5px rgba(0,0,0,.08)"></div>
<div class="a" style="left:749px;top:658px;width:631px;height:1px;background:#c9c9c9"></div>
<div class="t" style="left:1322px;top:663px;font-size:12px;line-height:18px;color:#aaa">字数统计</div>
<div class="a" style="left:829px;top:270px;width:1px;height:38px;background:#e6e6e6"></div>
<div class="a" style="left:1122px;top:270px;width:1px;height:38px;background:#e6e6e6"></div>
<div class="a" style="left:1240px;top:270px;width:1px;height:38px;background:#e6e6e6"></div>
<div class="a" style="left:1307px;top:270px;width:1px;height:38px;background:#e6e6e6"></div>
<div class="t" style="left:779px;top:295px;font-size:12px;line-height:18px;color:#888">操作</div>
<div class="t" style="left:964px;top:295px;font-size:12px;line-height:18px;color:#888">文字</div>
<div class="t" style="left:1169px;top:295px;font-size:12px;line-height:18px;color:#888">排版</div>
<div class="t" style="left:1262px;top:295px;font-size:12px;line-height:18px;color:#888">插入</div>
<div class="t" style="left:1329px;top:295px;font-size:12px;line-height:18px;color:#888">视图</div>
<div class="t" style="left:840px;top:273px;font-size:12px;line-height:18px;color:#222">微软雅黑</div>
<div class="t" style="left:918px;top:273px;font-size:13px;line-height:18px;color:#222">14px</div>
<div class="t" style="left:1066px;top:271px;font-size:14.4px;line-height:18px;color:#5c6478;font-weight:bold;transform:scaleX(0.85);transform-origin:0 0">B</div>
<svg class="a" style="left:0;top:0" width="1877" height="862" viewBox="0 0 1877 862"><path d="M785 279H790.5L787.75 282.2z" fill="#8a94a6"/><path d="M896 279H901.5L898.75 282.2z" fill="#8a94a6"/><path d="M960 279H965.5L962.75 282.2z" fill="#8a94a6"/><path d="M1003 279H1008.5L1005.75 282.2z" fill="#8a94a6"/><path d="M1045 279H1050.5L1047.75 282.2z" fill="#8a94a6"/><path d="M1154 279H1159.5L1156.75 282.2z" fill="#8a94a6"/><path d="M1196 279H1201.5L1198.75 282.2z" fill="#8a94a6"/><path d="M807 302H812.5L809.75 305.2z" fill="#8a94a6"/><path d="M991 302H996.5L993.75 305.2z" fill="#8a94a6"/><path d="M1197 302H1202.5L1199.75 305.2z" fill="#8a94a6"/><path d="M1289 302H1294.5L1291.75 305.2z" fill="#8a94a6"/><path d="M1356 302H1361.5L1358.75 305.2z" fill="#8a94a6"/><path d="M763 281 L765.8 278 L772 284.3 L769 287z" fill="#e88a8c"/><path d="M765.8 278 L771.5 272.5 L777.5 278.5 L772 284.3" fill="none" stroke="#5c6478" stroke-width="1"/><path d="M806.6 274.6 H815 L818.4 278 V286.4 H806.6 Z" fill="none" stroke="#5c6478" stroke-width="1.3"/><path d="M815 274.6 V278 H818.4z" fill="#5c6478"/><path d="M809.7 279 V284.2 L812.3 281.8 L814.9 284.2 V279" fill="none" stroke="#3a7be0" stroke-width="1"/><path d="M984.3 283 L988 274.3 L991.7 283 M985.6 280 H990.4" fill="none" stroke="#5c6478" stroke-width="1.1"/><rect x="981" y="286" width="14" height="3" fill="#000"/><path d="M1028.2 272 L1029.8 274 M1024.6 279 L1029.6 274 L1035 279" fill="none" stroke="#555" stroke-width="0.9"/><path d="M1024 279 H1035.5 L1029.7 285z" fill="#3a7be0"/><circle cx="1035.5" cy="282.6" r="1.4" fill="#3a7be0"/><rect x="1023" y="286" width="14" height="3" fill="#3a7be0"/><path d="M1101.9 275 V281.3 Q1101.9 284.8 1105.5 284.8 Q1109.1 284.8 1109.1 281.3 V275 M1101 286.6 H1110" fill="none" stroke="#5c6478" stroke-width="1.1"/><path d="M1133 275.5 H1146 M1133 280.5 H1141 M1133 285.5 H1146" stroke="#5c6478" stroke-width="1.1"/><path d="M1175 274.5 H1188 M1182 278.5 H1188 M1182 282.5 H1188 M1175 286.5 H1188" stroke="#5c6478" stroke-width="1.1"/><path d="M1175.6 279.6 L1178.6 276.8 L1181.6 279.6z M1175.6 281.4 L1178.6 284.2 L1181.6 281.4z" fill="#3a7be0"/><path d="M1222 274.5 H1230 M1222 278.5 H1230 M1217 282.5 H1230 M1217 286.5 H1230" stroke="#5c6478" stroke-width="1.1"/><path d="M1217 273.8 V279.2 L1220.8 276.5z" fill="#3a7be0"/><rect x="1251.6" y="274.6" width="11.8" height="11.8" fill="none" stroke="#5c6478" stroke-width="1.2"/><circle cx="1255" cy="278" r="0.9" fill="#e55"/><path d="M1253 285 L1256 282 L1257.8 283 L1260.3 280 L1262.3 282.5 V285z" fill="#3a7be0"/><g transform="rotate(-45 1290.5 279.5)" fill="none" stroke="#5c6478" stroke-width="1.2"><path d="M1289 276.4 H1285 A3.1 3.1 0 0 0 1285 282.6 H1289"/><path d="M1292 276.4 H1296 A3.1 3.1 0 0 1 1296 282.6 H1292"/><path d="M1286.5 279.5 H1294.5"/></g><path d="M1320 277 L1316.5 280.5 L1320 284 M1330.5 277 L1334 280.5 L1330.5 284 M1326.8 275 L1323.6 286.8" fill="none" stroke="#5c6478" stroke-width="1.1"/><path d="M1352.5 278.5 V274.5 H1356.5 M1364.9 282.5 V286.4 H1361" fill="none" stroke="#5c6478" stroke-width="1.1"/><path d="M1359.8 279.6 L1364.6 274.8 M1361 274.5 H1364.9 V278.4 M1357.6 281.6 L1352.8 286.4 M1352.6 282.6 V286.5 H1356.5" fill="none" stroke="#3a7be0" stroke-width="1.2"/></svg>
<div class="a" style="left:848px;top:748px;width:90px;height:34px;border:1px solid #e3e3e8;border-radius:2px;font-size:14px;line-height:34px;text-align:center;color:#bbb;letter-spacing:4px;text-indent:4px">确定</div>
<div class="a" style="left:974px;top:748px;width:90px;height:34px;border:1px solid #dcdce6;border-radius:2px;font-size:14px;line-height:34px;text-align:center;color:#222;letter-spacing:4px;text-indent:4px">取消</div>
<div class="a" style="left:11px;top:165px;width:95px;height:53px;border:4px solid #ff3838;border-radius:5px"></div>
<div class="a" style="left:0;top:401px;width:1877px;height:60px;background:rgba(255,255,255,.8)"></div>
<div class="t" style="left:20px;top:420px;font-size:20px;line-height:22px;color:#111;font-weight:500">制作网站的基本流程，公司网页怎么做（公司网站制作方案）</div>
</body></html>
